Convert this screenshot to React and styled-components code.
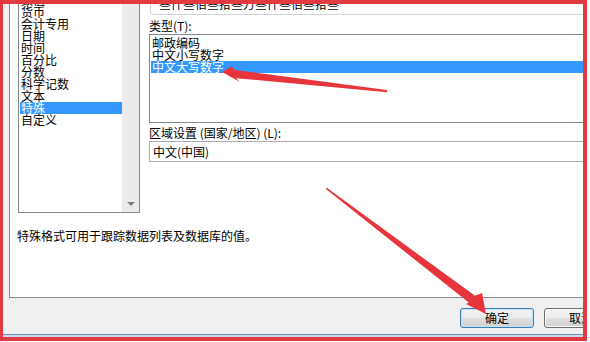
import React from "react";
import styled, { createGlobalStyle, css } from "styled-components";

const GlobalStyle = createGlobalStyle`
  html, body {
    margin: 0;
    padding: 0;
    background: #ffffff;
  }
  body {
    font-family: "Noto Sans CJK SC", "Noto Sans", sans-serif;
    font-size: 12px;
    color: #000;
  }
`;

const Stage = styled.div`
  position: relative;
  width: 590px;
  height: 342px;
  overflow: hidden;
  background: #ffffff;
`;

const Dialog = styled.div`
  display: flex;
  flex-direction: column;
  width: 587px;
  height: 334px;
  overflow: hidden;
  background: #f0f0f0;
`;

const FrameEdge = styled.div`
  width: 587px;
  height: 3px;
  background: linear-gradient(#6f8fb6 0 1px, #c9dbef 1px 100%);
`;

const TabPage = styled.div`
  flex: none;
  box-sizing: border-box;
  width: 640px;
  height: 346px;
  margin: -48px 0 0 9px;
  padding-top: 13px;
  background: #ffffff;
  border-left: 1px solid #898c95;
  border-bottom: 1px solid #898c95;
`;

const Columns = styled.div`
  display: grid;
  grid-template-columns: 122px 1fr;
  column-gap: 9px;
  align-items: start;
  padding-left: 8px;
`;

const Column = styled.div`
  display: flex;
  flex-direction: column;
`;

const FieldLabel = styled.div`
  height: 12px;
  line-height: 12px;
  white-space: nowrap;
  margin-top: ${(p) => p.$mt || 0}px;
  margin-bottom: ${(p) => p.$mb || 0}px;
`;

const SampleBox = styled.div`
  margin-left: 1px;
  padding: 18px 8px 4px;
  line-height: 12px;
  white-space: nowrap;
  border: 1px solid #d3d3d3;
  border-radius: 3px;
`;

const ListBox = styled.div`
  display: flex;
  box-sizing: border-box;
  height: ${(p) => p.$height}px;
  background: #ffffff;
  border: 1px solid #828790;
  overflow: hidden;
`;

const ListItems = styled.div`
  flex: 1;
  padding-top: ${(p) => p.$padTop}px;
`;

const ListItem = styled.div`
  height: 12px;
  line-height: 12px;
  margin-left: 1px;
  padding-left: 1px;
  white-space: nowrap;
  ${(p) =>
    p.$selected &&
    css`
      background: #3399ff;
      color: #ffffff;
    `}
`;

const ScrollTrack = styled.div`
  display: flex;
  flex-direction: column;
  justify-content: flex-end;
  width: 17px;
  background: #ebebeb;
`;

const ScrollArrow = styled.div`
  display: flex;
  align-items: center;
  justify-content: center;
  height: 17px;

  &::after {
    content: "";
    border-left: 4px solid transparent;
    border-right: 4px solid transparent;
    border-top: 4px solid #7c7c7c;
  }
`;

const ComboBox = styled.div`
  height: 19px;
  line-height: 19px;
  padding-left: 3px;
  background: #ffffff;
  border: 1px solid #abadb3;
`;

const Description = styled.div`
  margin: 17px 0 0 7px;
  line-height: 12px;
`;

const ButtonRow = styled.div`
  display: flex;
  gap: 10px;
  margin-top: 10px;
  padding-left: 460px;
`;

const DialogButton = styled.button`
  flex: none;
  box-sizing: border-box;
  width: 74px;
  height: 20px;
  padding: 0;
  font: inherit;
  line-height: 18px;
  color: #000;
  border-radius: 3px;
  border: 1px solid ${(p) => (p.$primary ? "#3c7fb1" : "#707070")};
  background: linear-gradient(#f4f4f4 0%, #ececec 48%, #dedede 52%, #d2d2d2 100%);
  box-shadow: inset 0 0 0 1px ${(p) => (p.$primary ? "#bfe4f7" : "#fbfbfb")};
`;

const AnnotationFrame = styled.div`
  position: absolute;
  left: 0;
  top: 0;
  width: 587px;
  height: 341px;
  box-sizing: border-box;
  border-style: solid;
  border-color: #e23a40;
  border-width: 4px 4px 4px 3px;
  pointer-events: none;
`;

const ArrowLayer = styled.svg`
  position: absolute;
  left: 0;
  top: 0;
  pointer-events: none;
`;

const categories = [
  "常规",
  "数值",
  "货币",
  "会计专用",
  "日期",
  "时间",
  "百分比",
  "分数",
  "科学记数",
  "文本",
  "特殊",
  "自定义",
];

const types = ["邮政编码", "中文小写数字", "中文大写数字"];

export default function App() {
  return (
    <>
      <GlobalStyle />
      <Stage>
        <Dialog>
          <TabPage>
            <Columns>
              <Column>
                <FieldLabel $mb={3}>分类(C):</FieldLabel>
                <ListBox $height={233}>
                  <ListItems $padTop={1}>
                    {categories.map((c) => (
                      <ListItem key={c} $selected={c === "特殊"}>
                        {c}
                      </ListItem>
                    ))}
                  </ListItems>
                  <ScrollTrack>
                    <ScrollArrow />
                  </ScrollTrack>
                </ListBox>
              </Column>
              <Column>
                <FieldLabel $mb={2}>示例</FieldLabel>
                <SampleBox>叁仟叁佰叁拾叁万叁仟叁佰叁拾叁</SampleBox>
                <FieldLabel $mt={5} $mb={2}>
                  类型(T):
                </FieldLabel>
                <ListBox $height={89}>
                  <ListItems $padTop={2}>
                    {types.map((t) => (
                      <ListItem key={t} $selected={t === "中文大写数字"}>
                        {t}
                      </ListItem>
                    ))}
                  </ListItems>
                </ListBox>
                <FieldLabel $mt={4} $mb={2}>
                  区域设置 (国家/地区) (L):
                </FieldLabel>
                <ComboBox>中文(中国)</ComboBox>
              </Column>
            </Columns>
            <Description>特殊格式可用于跟踪数据列表及数据库的值。</Description>
          </TabPage>
          <ButtonRow>
            <DialogButton $primary>确定</DialogButton>
            <DialogButton>取消</DialogButton>
          </ButtonRow>
        </Dialog>
        <FrameEdge />

        <AnnotationFrame />
        <ArrowLayer width="590" height="342" viewBox="0 0 590 342">
          <polygon
            fill="#e8353c"
            points="222,72 232,66 233.5,69.8 387,90 387,92.2 236,78.2 240,82"
          />
          <polygon
            fill="#e8353c"
            points="326.8,187.8 475,295.8 482,293 486,314 466,304 468.8,302.4 325.9,189.1"
          />
        </ArrowLayer>
      </Stage>
    </>
  );
}
